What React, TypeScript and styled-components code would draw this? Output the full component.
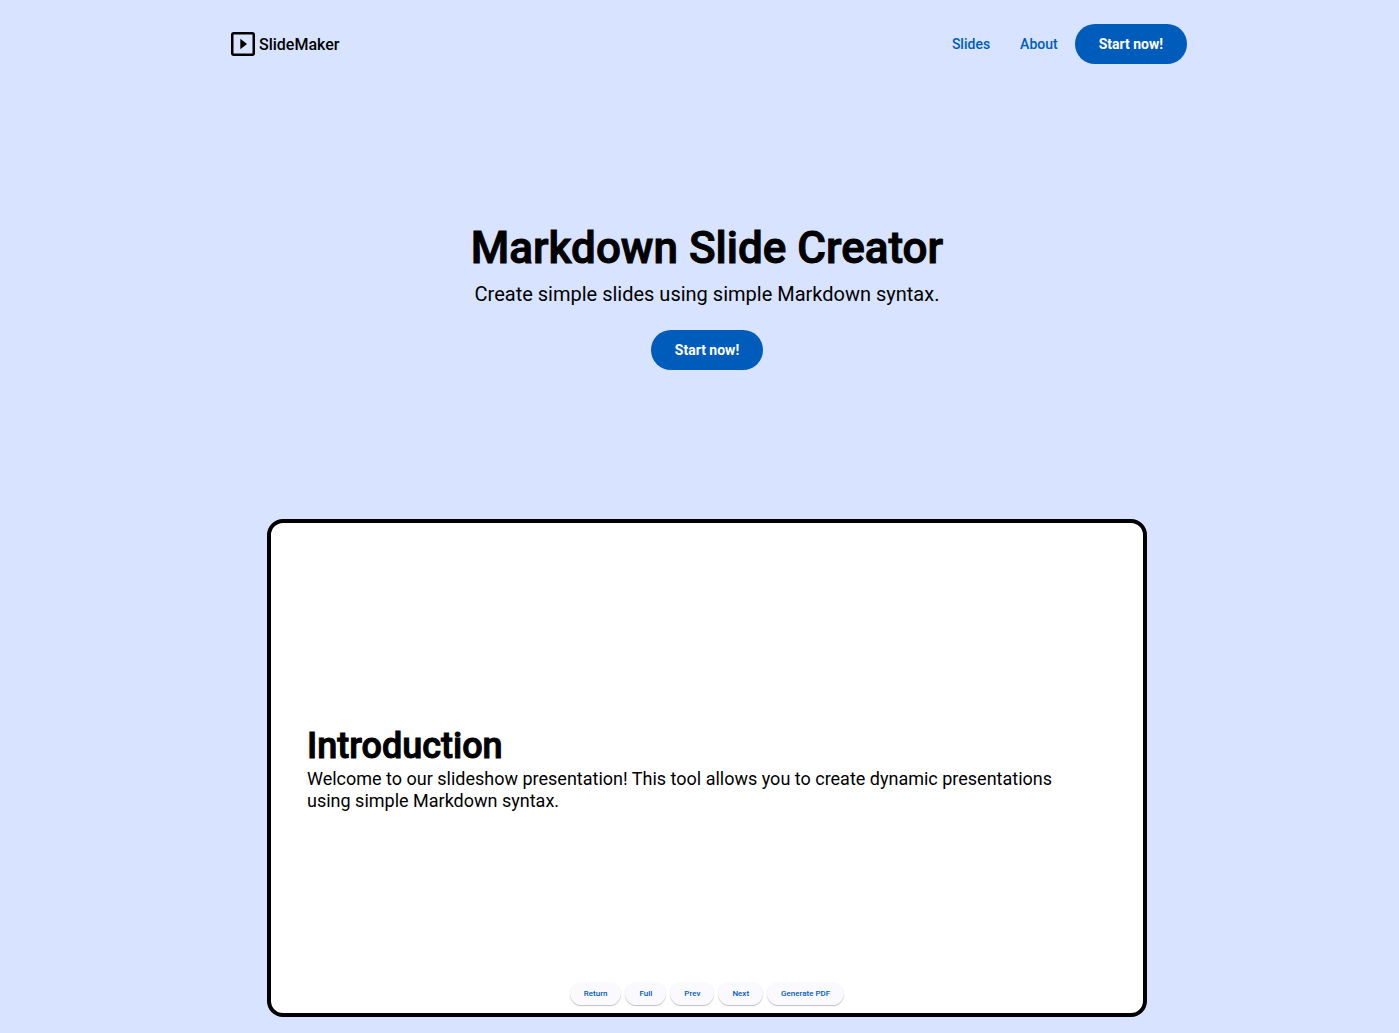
import React from "react";
import styled, { createGlobalStyle } from "styled-components";

const GlobalStyle = createGlobalStyle`
  * { box-sizing: border-box; }
  body {
    margin: 0;
    background: #d7e3ff;
    color: #000;
    font-family: Roboto, "Liberation Sans", sans-serif;
  }
`;

const Page = styled.div`
  padding: 0 0 16px 15px;
`;

const Header = styled.header`
  display: flex;
  align-items: center;
  justify-content: space-between;
  max-width: 960px;
  margin: 0 auto;
  padding: 24px 0;
`;

const Brand = styled.a`
  display: flex;
  align-items: center;
  gap: 4px;
  padding-left: 4px;
  color: #000;
  font-size: 16px;
  font-weight: 500;
  line-height: 25px;
  text-decoration: none;
`;

const LogoIcon = styled.svg`
  display: block;
  width: 24px;
  height: 24px;
`;

const Nav = styled.nav`
  display: flex;
  align-items: center;
  gap: 4px;
`;

const NavLink = styled.a`
  padding: 10px 13px;
  color: #005cbb;
  font-size: 14px;
  font-weight: 500;
  line-height: 20px;
  text-decoration: none;
`;

const FilledButton = styled.button`
  height: 40px;
  padding: 0 24px;
  border: 0;
  border-radius: 20px;
  background: #005cbb;
  color: #fff;
  font: 700 14px/20px Roboto, "Liberation Sans", sans-serif;
  cursor: pointer;
`;

const Hero = styled.section`
  display: flex;
  flex-direction: column;
  align-items: center;
  padding: 134px 16px 149px;
  text-align: center;
`;

const Title = styled.h1`
  margin: 0;
  font-size: 44px;
  font-weight: 500;
  line-height: 52px;
  -webkit-text-stroke: 1px #000;
`;

const Subtitle = styled.p`
  margin: 6px 0 22px;
  font-size: 20px;
  line-height: 28px;
`;

const Preview = styled.section`
  display: flex;
  flex-direction: column;
  width: calc(100% - 80px);
  max-width: 880px;
  aspect-ratio: 880 / 498;
  margin: 0 auto;
  padding: 32px 36px 8px;
  border: 4px solid #000;
  border-radius: 16px;
  background: #fff;
`;

const Slide = styled.div`
  display: flex;
  flex: 1;
  flex-direction: column;
  justify-content: center;
  padding-right: 32px;
`;

const SlideTitle = styled.h2`
  margin: 0;
  font-size: 36px;
  font-weight: 500;
  line-height: 43px;
  -webkit-text-stroke: 1px #000;
`;

const SlideText = styled.p`
  margin: 0;
  font-size: 18px;
  line-height: 22px;
`;

const Controls = styled.div`
  display: flex;
  justify-content: center;
  gap: 4px;
`;

const ControlButton = styled.button`
  height: 23px;
  padding: 0 14px;
  border: 0;
  border-radius: 12px;
  background: #faf9fd;
  box-shadow: 0 1px 1px rgba(0, 0, 0, 0.25);
  color: #005cbb;
  font: 500 8px/12px Roboto, "Liberation Sans", sans-serif;
  cursor: pointer;
`;

const controls = ["Return", "Full", "Prev", "Next", "Generate PDF"];

export default function App() {
  return (
    <Page>
      <GlobalStyle />
      <Header>
        <Brand href="#">
          <LogoIcon viewBox="0 0 24 24" aria-hidden="true">
            <rect x="1.25" y="1.25" width="21.5" height="21.5" rx="1.5" fill="none" stroke="#000" strokeWidth="2.5" />
            <path d="M9.3 6.8v10.4l6.7-5.2z" fill="#000" />
          </LogoIcon>
          SlideMaker
        </Brand>
        <Nav>
          <NavLink href="#slides">Slides</NavLink>
          <NavLink href="#about">About</NavLink>
          <FilledButton type="button">Start now!</FilledButton>
        </Nav>
      </Header>
      <main>
        <Hero>
          <Title>Markdown Slide Creator</Title>
          <Subtitle>Create simple slides using simple Markdown syntax.</Subtitle>
          <FilledButton type="button">Start now!</FilledButton>
        </Hero>
        <Preview>
          <Slide>
            <SlideTitle>Introduction</SlideTitle>
            <SlideText>
              Welcome to our slideshow presentation! This tool allows you to create dynamic presentations
              using simple Markdown syntax.
            </SlideText>
          </Slide>
          <Controls>
            {controls.map((label) => (
              <ControlButton key={label} type="button">{label}</ControlButton>
            ))}
          </Controls>
        </Preview>
      </main>
    </Page>
  );
}
